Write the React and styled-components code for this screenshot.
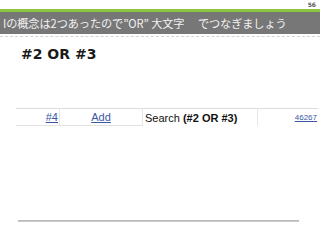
import React from "react";
import styled, { createGlobalStyle } from "styled-components";

const GlobalStyle = createGlobalStyle`
  html, body {
    margin: 0;
    padding: 0;
    background: #ffffff;
  }
  body {
    width: 320px;
    height: 240px;
    overflow: hidden;
    font-family: "Liberation Sans", Arial, sans-serif;
  }
`;

const Slide = styled.div`
  width: 320px;
  height: 240px;
  display: flex;
  flex-direction: column;
  background: #fff;
`;

const PageNo = styled.div`
  height: 9px;
  padding-right: 4px;
  text-align: right;
  font-family: "DejaVu Sans", sans-serif;
  font-weight: bold;
  font-size: 6px;
  line-height: 9px;
  color: #555;
`;

const GreenRule = styled.div`
  height: 3px;
  background: #8cc63f;
`;

const TitleBar = styled.div`
  height: 22px;
  background: #777777;
  color: #f2f2f2;
  padding-left: 3px;
  display: flex;
  align-items: center;
  font-family: "Noto Sans CJK JP", "Noto Sans", sans-serif;
  font-size: 11.2px;
  white-space: pre;
  letter-spacing: -0.1px;
`;

const DottedRule = styled.div`
  margin-top: 2px;
  height: 0;
  border-top: 1px dashed #d4d4d4;
`;

const Heading = styled.h2`
  margin: 9px 0 0 21px;
  font-family: "DejaVu Sans", Verdana, sans-serif;
  font-weight: bold;
  font-size: 14px;
  line-height: 16px;
  color: #1a1a1a;
`;

const Row = styled.div`
  margin: 46px 0 0 16px;
  display: flex;
  height: 18px;
  font-size: 11px;
  color: #111;
`;

const Cell = styled.div`
  width: ${(p) => p.w}px;
  box-sizing: border-box;
  display: flex;
  align-items: center;
  justify-content: ${(p) => p.align || "flex-start"};
  padding: 0 ${(p) => (p.align === "flex-end" ? 1 : 2)}px;
  border-top: 1px solid #dcdcdc;
  border-bottom: ${(p) => (p.noBottom ? "none" : "1px solid #e2e2e2")};
  border-right: ${(p) => (p.noRight ? "none" : "1px solid #e6e6e6")};
  font-size: ${(p) => p.size || 11}px;
`;

const Link = styled.a`
  color: #3a57a6;
  text-decoration: underline;
`;

const Bottom = styled.div`
  margin: 94px 0 0 18px;
  width: 281px;
  height: 2px;
  background: linear-gradient(#b5b5b5, #d0d0d0);
`;

export default function App() {
  return (
    <>
      <GlobalStyle />
      <Slide>
        <PageNo>56</PageNo>
        <GreenRule />
        <TitleBar>{"Iの概念は2つあったので\u201DOR\u201D 大文字\u3000 でつなぎましょう"}</TitleBar>
        <DottedRule />
        <Heading>#2 OR #3</Heading>
        <Row>
          <Cell w={44} align="flex-end">
            <Link>#4</Link>
          </Cell>
          <Cell w={83} align="center">
            <Link>Add</Link>
          </Cell>
          <Cell w={115} noBottom>
            Search&nbsp;<b>(#2 OR #3)</b>
          </Cell>
          <Cell w={60} align="flex-end" size={8} noRight noBottom>
            <Link>46267</Link>
          </Cell>
        </Row>
        <Bottom />
      </Slide>
    </>
  );
}
